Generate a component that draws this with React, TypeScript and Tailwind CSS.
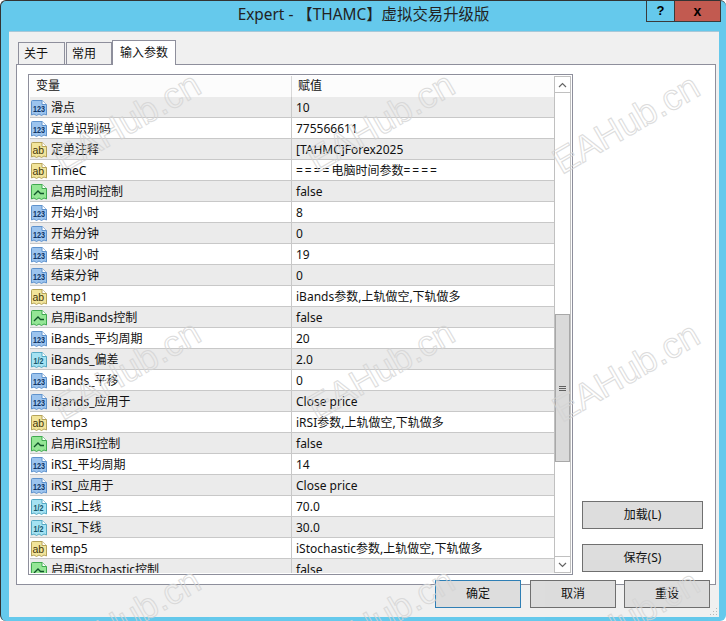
import React from 'react';

// --- Type Definitions ---
type ParamType = 'int' | 'str' | 'bool' | 'dbl';

interface Param {
  name: string;
  value: string;
  type: ParamType;
}

const FONT = "font-['Noto_Sans','Noto_Sans_CJK_SC',sans-serif]";

const params: Param[] = [
  { name: '滑点', value: '10', type: 'int' },
  { name: '定单识别码', value: '775566611', type: 'int' },
  { name: '定单注释', value: '[TAHMC]Forex2025', type: 'str' },
  { name: 'TimeC', value: '====电脑时间参数====', type: 'str' },
  { name: '启用时间控制', value: 'false', type: 'bool' },
  { name: '开始小时', value: '8', type: 'int' },
  { name: '开始分钟', value: '0', type: 'int' },
  { name: '结束小时', value: '19', type: 'int' },
  { name: '结束分钟', value: '0', type: 'int' },
  { name: 'temp1', value: 'iBands参数,上轨做空,下轨做多', type: 'str' },
  { name: '启用iBands控制', value: 'false', type: 'bool' },
  { name: 'iBands_平均周期', value: '20', type: 'int' },
  { name: 'iBands_偏差', value: '2.0', type: 'dbl' },
  { name: 'iBands_平移', value: '0', type: 'int' },
  { name: 'iBands_应用于', value: 'Close price', type: 'int' },
  { name: 'temp3', value: 'iRSI参数,上轨做空,下轨做多', type: 'str' },
  { name: '启用iRSI控制', value: 'false', type: 'bool' },
  { name: 'iRSI_平均周期', value: '14', type: 'int' },
  { name: 'iRSI_应用于', value: 'Close price', type: 'int' },
  { name: 'iRSI_上线', value: '70.0', type: 'dbl' },
  { name: 'iRSI_下线', value: '30.0', type: 'dbl' },
  { name: 'temp5', value: 'iStochastic参数,上轨做空,下轨做多', type: 'str' },
  { name: '启用iStochastic控制', value: 'false', type: 'bool' },
];

const iconColors: Record<ParamType, { fill: string; stroke: string }> = {
  int: { fill: '#9cc4ee', stroke: '#5f92cc' },
  str: { fill: '#f2e49a', stroke: '#b5a35a' },
  bool: { fill: '#94e695', stroke: '#3fa84f' },
  dbl: { fill: '#a4e2f2', stroke: '#55a9c4' },
};

// --- Small document icon in front of every parameter ---
const TypeIcon: React.FC<{ type: ParamType }> = ({ type }) => {
  const c = iconColors[type];
  return (
    <svg width="16" height="16" viewBox="0 0 16 16" className="shrink-0">
      <path d="M0.5 1.5Q0.5 0.5 1.5 0.5H11L15.5 4.5V15L13 14L10.5 15.5L8 14L5.5 15.5L3 14L0.5 15Z" fill={c.fill} stroke={c.stroke} />
      <path d="M11 0.5V4.5H15.5" fill="#fff" stroke={c.stroke} />
      {type === 'int' && (
        <text x="2" y="11.5" fontSize="8.5" fontWeight="700" fill="#0f3566" fontFamily="Liberation Sans" textLength="12" lengthAdjust="spacingAndGlyphs">123</text>
      )}
      {type === 'str' && (
        <text x="1.5" y="11.5" fontSize="10.5" fill="#3f340a" fontFamily="Liberation Sans">ab</text>
      )}
      {type === 'dbl' && (
        <text x="2.5" y="11.5" fontSize="8.5" fontWeight="700" fill="#16566c" fontFamily="Liberation Sans" textLength="10" lengthAdjust="spacingAndGlyphs">1/2</text>
      )}
      {type === 'bool' && <path d="M3 11L7 7L9.5 9.5H13" fill="none" stroke="#10552a" strokeWidth="1.3" />}
    </svg>
  );
};

const Tab: React.FC<{ label: string; active?: boolean; className?: string }> = ({ label, active, className }) => (
  <div
    className={`border border-[#8e8f9c] text-[12px] text-[#111] ${active ? 'h-[25px] bg-white border-b-0 z-10 relative px-[7px] pt-[3px]' : 'h-[23px] bg-[#f0f0f0] px-[5px] pt-[2px]'} ${className ?? ''}`}
  >
    {label}
  </div>
);

const DialogButton: React.FC<{ label: string; primary?: boolean; className?: string }> = ({ label, primary, className }) => (
  <button
    className={`h-[28px] bg-[#dddddd] border text-[12px] text-[#111] ${primary ? 'border-[#2f7fb5]' : 'border-[#707070]'} ${className ?? ''}`}
  >
    {label}
  </button>
);

const watermarks = [
  'left-[45px] top-[103px]', 'left-[299px] top-[103px]', 'left-[544px] top-[105px]',
  'left-[45px] top-[351px]', 'left-[299px] top-[351px]', 'left-[544px] top-[353px]',
  'left-[45px] top-[599px]', 'left-[299px] top-[599px]', 'left-[544px] top-[601px]',
];

export default function App() {
  return (
    <div className={`${FONT} relative w-[726px] h-[621px] overflow-hidden bg-[#65c9ec] border-t border-l border-[#333] rounded-[6px] flex flex-col`}>
      {/* Title bar */}
      <div className="relative h-[30px] shrink-0 flex items-center justify-center pb-[2px] text-[15.4px] text-[#222]">
        Expert - 【THAMC】虚拟交易升级版
        <div className="absolute right-[5px] top-0 flex h-[21px] border border-t-0 border-[#3a3a3a]">
          <div className="w-[28px] flex items-center justify-center border-r border-[#3a3a3a] text-[13px] font-bold text-black font-['Liberation_Sans']">?</div>
          <div className="w-[45px] flex items-center justify-center bg-[#c25a50] text-[14px] font-bold text-black font-['Liberation_Sans']">x</div>
        </div>
      </div>

      {/* Client area */}
      <div className="relative flex-1 ml-[8px] mr-[7px] mb-[4px] bg-[#f0f0f0] border-t border-[#a8c8d8] pt-[8px] px-[7px] flex flex-col">
        <div className="flex items-end pl-[2px] h-[25px] -mb-[1px]">
          <Tab label="关于" className="w-[47px]" />
          <Tab label="常用" className="w-[46px] ml-px" />
          <Tab label="输入参数" className="w-[64px]" active />
        </div>

        {/* Tab panel */}
        <div className="h-[521px] w-[700px] bg-white border border-[#8e8f9c] pt-[9px] pl-[11px] flex shrink-0">
          {/* Parameter list */}
          <div className="w-[545px] h-[501px] border border-[#8e8f9c] flex overflow-hidden">
            <div className="w-[525px] h-[498px] overflow-hidden pl-px pt-px">
              <div className="flex h-[21px] bg-[#fcfcfc] text-[12px] text-[#111]">
                <div className="w-[262px] pl-[6px] border-r border-[#d8d8d8] leading-[20px]">变量</div>
                <div className="flex-1 pl-[6px] leading-[20px]">赋值</div>
              </div>
              {params.map((p, i) => (
                <div
                  key={p.name}
                  className={`flex h-[21px] border-b border-[#c8c8c8] text-[12px] text-[#111] ${i % 2 === 0 ? 'bg-[#ebebeb]' : 'bg-white'}`}
                >
                  <div className="w-[262px] flex items-center gap-[4px] pl-[1px] pt-[2px] border-r border-[#c8c8c8] whitespace-nowrap">
                    <TypeIcon type={p.type} />
                    <span>{p.name}</span>
                  </div>
                  <div className="flex-1 flex items-center pl-[4px] pt-[2px] whitespace-nowrap">
                    {p.name === 'TimeC' ? (
                      <>
                        <span className="tracking-[2px]">====</span>电脑时间参数<span className="tracking-[2px]">====</span>
                      </>
                    ) : (
                      p.value
                    )}
                  </div>
                </div>
              ))}
            </div>
            {/* Scrollbar */}
            <div className="w-[17px] h-[497px] flex flex-col border border-[#c0c0c0] mt-px bg-white">
              <div className="h-[16px] shrink-0 flex items-center justify-center border-b border-[#c0c0c0]">
                <svg width="9" height="6" viewBox="0 0 9 6"><path d="M1 5L4.5 1.5L8 5" fill="none" stroke="#666" strokeWidth="1.2" /></svg>
              </div>
              <div className="h-[221px] shrink-0" />
              <div className="h-[148px] shrink-0 bg-[#dadada] border border-[#a8a8a8] flex flex-col items-center justify-center gap-px">
                <div className="w-[7px] h-px bg-[#606060]" />
                <div className="w-[7px] h-px bg-[#606060]" />
                <div className="w-[7px] h-px bg-[#606060]" />
              </div>
              <div className="flex-1" />
              <div className="h-[16px] shrink-0 flex items-center justify-center border-t border-[#c0c0c0]">
                <svg width="9" height="6" viewBox="0 0 9 6"><path d="M1 1L4.5 4.5L8 1" fill="none" stroke="#666" strokeWidth="1.2" /></svg>
              </div>
            </div>
          </div>

          {/* Load / save */}
          <div className="flex flex-col gap-[15px] pt-[427px] pl-[9px]">
            <DialogButton label="加载(L)" className="w-[121px]" />
            <DialogButton label="保存(S)" className="w-[121px]" />
          </div>
        </div>

        {/* Dialog buttons */}
        <div className="relative z-10 -mt-[5px] flex pl-[419px]">
          <DialogButton label="确定" primary className="w-[86px]" />
          <DialogButton label="取消" className="w-[86px] ml-[9px]" />
          <DialogButton label="重设" className="w-[86px] ml-[8px]" />
        </div>

        {/* Resize grip */}
        <svg width="9" height="9" viewBox="0 0 9 9" className="absolute right-[1px] bottom-[1px]" fill="#b8b8b8">
          <rect x="7" y="1" width="1" height="1" />
          <rect x="4" y="4" width="1" height="1" />
          <rect x="7" y="4" width="1" height="1" />
          <rect x="1" y="7" width="1" height="1" />
          <rect x="4" y="7" width="1" height="1" />
          <rect x="7" y="7" width="1" height="1" />
        </svg>
      </div>

      {/* Watermark */}
      {watermarks.map((pos) => (
        <div
          key={pos}
          className={`absolute ${pos} pointer-events-none -rotate-30 text-[36px] leading-none font-['Liberation_Sans'] text-transparent [-webkit-text-stroke:1px_#d4d4d4] opacity-80 whitespace-nowrap z-20`}
        >
          EAHub.cn
        </div>
      ))}
    </div>
  );
}
